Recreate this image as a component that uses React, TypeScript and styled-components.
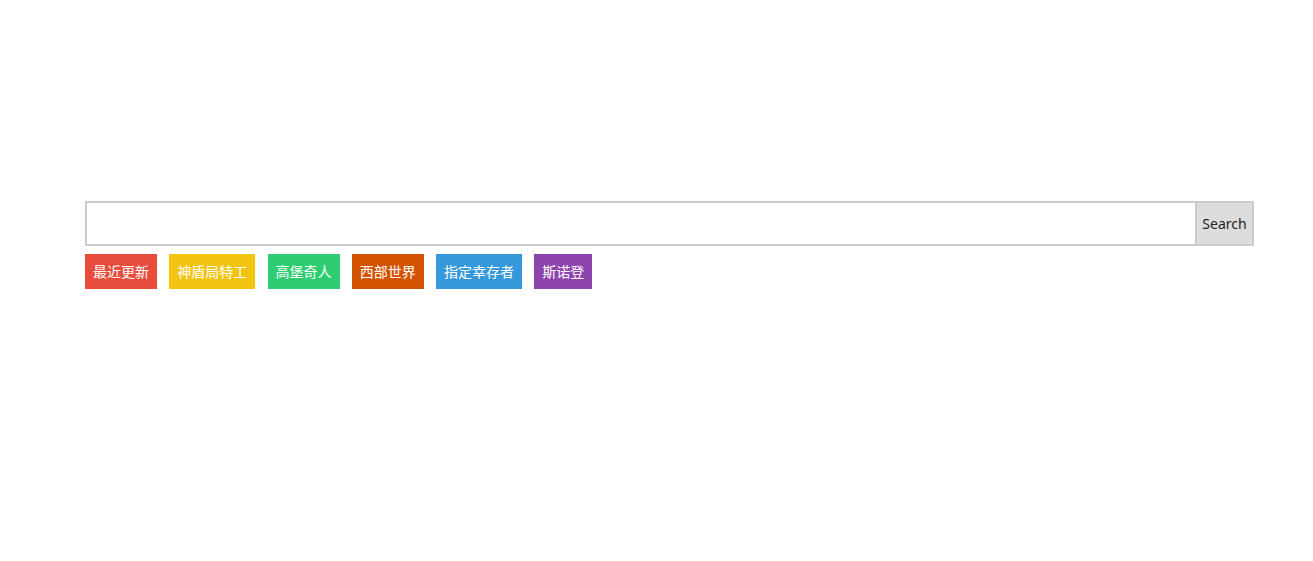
import React from 'react';
import styled, { createGlobalStyle } from 'styled-components';

const GlobalStyle = createGlobalStyle`
  html, body {
    margin: 0;
    padding: 0;
    background: #ffffff;
    font-family: "Noto Sans", "Noto Sans CJK SC", sans-serif;
  }
`;

const tags = [
  { label: '最近更新', color: '#e74c3c' },
  { label: '神盾局特工', color: '#f1c40f' },
  { label: '高堡奇人', color: '#2ecc71' },
  { label: '西部世界', color: '#d35400' },
  { label: '指定幸存者', color: '#3498db' },
  { label: '斯诺登', color: '#8e44ad' },
];

const App: React.FC = () => {
  return (
    <>
      <GlobalStyle />
      <Page>
        <SearchBar>
          <SearchInput spellCheck="false" />
          <SearchBtn>Search</SearchBtn>
        </SearchBar>
        <TagList>
          {tags.map((t) => (
            <Tag key={t.label} $bg={t.color}>
              {t.label}
            </Tag>
          ))}
        </TagList>
      </Page>
    </>
  );
};

export default App;

const Page = styled.div`
  padding: 201px 59px 0 85px;
`;

const SearchBar = styled.div`
  display: flex;
  height: 45px;
`;

const SearchInput = styled.input`
  flex: 1;
  box-sizing: border-box;
  height: 45px;
  border: 2px solid #cccccc;
  border-right: none;
  outline: none;
  padding: 0 10px;
  font-size: 16px;
`;

const SearchBtn = styled.button`
  box-sizing: border-box;
  width: 59px;
  height: 45px;
  border: 2px solid #cccccc;
  background: #dddddd;
  color: #222222;
  font-family: "Noto Sans", sans-serif;
  font-size: 14px;
  padding: 0;
  cursor: pointer;
`;

const TagList = styled.div`
  display: flex;
  gap: 12.25px;
  margin-top: 8px;
`;

const Tag = styled.span<{ $bg: string }>`
  display: inline-flex;
  align-items: center;
  height: 35px;
  padding: 0 8px;
  background: ${(p) => p.$bg};
  color: #ffffff;
  font-family: "Noto Sans CJK SC", sans-serif;
  font-size: 14px;
  line-height: 35px;
  white-space: nowrap;
`;
